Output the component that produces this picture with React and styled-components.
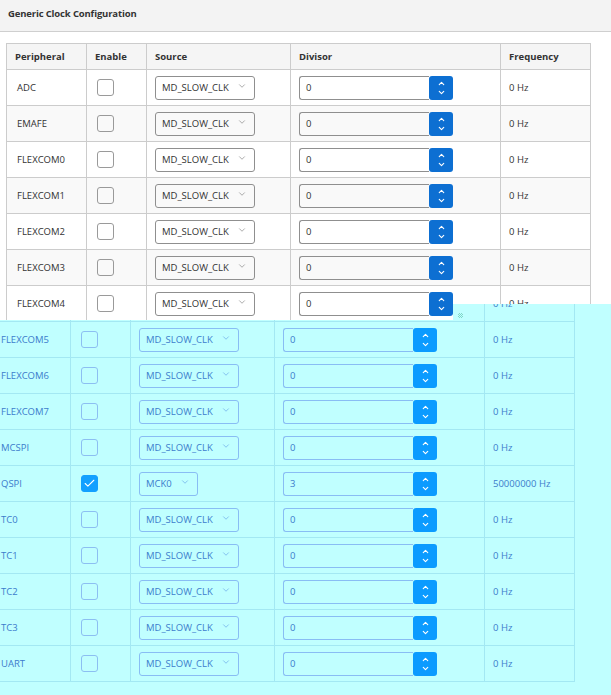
import React from "react";
import styled, { createGlobalStyle, ThemeProvider } from "styled-components";
import { ChevronDown, ChevronUp, Check } from "lucide-react";

const GlobalStyle = createGlobalStyle`
  html, body {
    margin: 0;
    padding: 0;
    background: #ffffff;
    overflow: hidden;
  }
  * {
    box-sizing: border-box;
  }
`;

const base = {
  page: "#ffffff",
  bar: "#f3f3f3",
  barLine: "#cfcfcf",
  head: "#f5f5f5",
  alt: "#f9f9f9",
  line: "#cccccc",
  text: "#333333",
  field: "#8f8f8f",
  box: "#9a9a9a",
  chevron: "#7a7a7a",
  spin: "#0d6fd2",
  check: "#0d6fd2",
};

// drag ghost of the lower rows, tinted and shifted left
const ghost = {
  page: "#c0ffff",
  bar: "#c0ffff",
  barLine: "#a3ecf4",
  head: "#c0ffff",
  alt: "#c0ffff",
  line: "#a3e8f3",
  text: "#3c7ccc",
  field: "#88bdf4",
  box: "#8cbff2",
  chevron: "#5f9de6",
  spin: "#0b9bff",
  check: "#12a0ff",
};

const rows = [
  { name: "ADC" },
  { name: "EMAFE" },
  { name: "FLEXCOM0" },
  { name: "FLEXCOM1" },
  { name: "FLEXCOM2" },
  { name: "FLEXCOM3" },
  { name: "FLEXCOM4" },
  { name: "FLEXCOM5" },
  { name: "FLEXCOM6" },
  { name: "FLEXCOM7" },
  { name: "MCSPI" },
  { name: "QSPI", enabled: true, source: "MCK0", divisor: "3", freq: "50000000 Hz" },
  { name: "TC0" },
  { name: "TC1" },
  { name: "TC2" },
  { name: "TC3" },
  { name: "UART" },
];

const ClockRow = ({ r, alt, freqOnly }) => (
  <Row $alt={alt}>
    <Cell>{!freqOnly && r.name}</Cell>
    <Cell $pad={10}>
      {!freqOnly && (
        <Box $on={r.enabled}>
          {r.enabled && <Check size={13} strokeWidth={2} color="#ffffff" />}
        </Box>
      )}
    </Cell>
    <Cell $pad={8}>
      {!freqOnly && (
        <Select>
          <span>{r.source || "MD_SLOW_CLK"}</span>
          <SelectArrow size={10} strokeWidth={1.5} />
        </Select>
      )}
    </Cell>
    <Cell $pad={8}>
      {!freqOnly && (
        <Spinner>
          <NumInput>{r.divisor || "0"}</NumInput>
          <SpinBtn>
            <ChevronUp size={9} strokeWidth={3} color="#ffffff" />
            <ChevronDown size={9} strokeWidth={3} color="#ffffff" />
          </SpinBtn>
        </Spinner>
      )}
    </Cell>
    <Cell $pad={8}>{r.freq || "0 Hz"}</Cell>
  </Row>
);

const App = () => (
  <>
    <GlobalStyle />
    <Screen>
      <ThemeProvider theme={base}>
        <Page>
          <TitleBar>Generic Clock Configuration</TitleBar>
          <Table>
            <HeadRow>
              <HeadCell>Peripheral</HeadCell>
              <HeadCell>Enable</HeadCell>
              <HeadCell>Source</HeadCell>
              <HeadCell>Divisor</HeadCell>
              <HeadCell>Frequency</HeadCell>
            </HeadRow>
            {rows.slice(0, 7).map((r, i) => (
              <ClockRow key={r.name} r={r} alt={i % 2 === 1} />
            ))}
          </Table>
        </Page>
      </ThemeProvider>
      <Ghost>
        <Cursor />
        <ThemeProvider theme={ghost}>
          <GhostTable>
            {rows.slice(6).map((r, i) => (
              <ClockRow key={r.name} r={r} freqOnly={i === 0} />
            ))}
          </GhostTable>
        </ThemeProvider>
      </Ghost>
    </Screen>
  </>
);

const Screen = styled.div`
  position: relative;
  width: 611px;
  height: 695px;
  overflow: hidden;
  font-family: "Open Sans", "Noto Sans", sans-serif;
`;

const Page = styled.div`
  width: 611px;
  height: 695px;
  background: ${(p) => p.theme.page};
  color: ${(p) => p.theme.text};
`;

const Ghost = styled.div`
  position: absolute;
  inset: 0;
  background: #c0ffff;
  color: ${ghost.text};
  clip-path: polygon(453px 304px, 611px 304px, 611px 695px, 0 695px, 0 320px, 453px 320px);
`;

const Cursor = styled.div`
  position: absolute;
  left: 458px;
  top: 313px;
  width: 5px;
  height: 5px;
  background: repeating-conic-gradient(#7fd6c8 0 25%, #c0ffff 0 50%) 0 0 / 2px 2px;
`;

const TitleBar = styled.div`
  height: 32px;
  padding: 7px 0 0 8px;
  background: ${(p) => p.theme.bar};
  border-bottom: 1px solid ${(p) => p.theme.barLine};
  font-size: 9.5px;
  font-weight: 700;
  line-height: 14px;
  letter-spacing: -0.15px;
`;

const Table = styled.div`
  width: 585px;
  margin: 11px 0 0 6px;
  border: 1px solid ${(p) => p.theme.line};
`;

const GhostTable = styled(Table)`
  margin: 285px 0 0 -10px;
  border-top: none;
`;

const HeadRow = styled.div`
  display: grid;
  grid-template-columns: 79px 60px 144px 210px 1fr;
  height: 25px;
  background: ${(p) => p.theme.head};
`;

const Row = styled(HeadRow)`
  height: 36px;
  border-top: 1px solid ${(p) => p.theme.line};
  background: ${(p) => (p.$alt ? p.theme.alt : p.theme.page)};
`;

const HeadCell = styled.div`
  display: flex;
  align-items: center;
  padding-left: 8px;
  font-size: 9.5px;
  font-weight: 700;
  &:not(:first-child) {
    border-left: 1px solid ${(p) => p.theme.line};
  }
`;

const Cell = styled.div`
  display: flex;
  align-items: center;
  padding-left: ${(p) => p.$pad || 10}px;
  font-size: 9.5px;
  &:not(:first-child) {
    border-left: 1px solid ${(p) => p.theme.line};
  }
`;

const Box = styled.div`
  width: 17px;
  height: 17px;
  border-radius: 3px;
  border: 1px solid ${(p) => (p.$on ? p.theme.check : p.theme.box)};
  background: ${(p) => (p.$on ? p.theme.check : "transparent")};
  display: flex;
  align-items: center;
  justify-content: center;
`;

const Select = styled.div`
  height: 24px;
  display: inline-flex;
  align-items: center;
  gap: 8px;
  padding: 0 7px 0 6px;
  border: 1px solid ${(p) => p.theme.field};
  border-radius: 3px;
  font-size: 9.5px;
`;

const SelectArrow = styled(ChevronDown)`
  color: ${(p) => p.theme.chevron};
  margin-top: -4px;
`;

const Spinner = styled.div`
  width: 154px;
  height: 24px;
  display: flex;
`;

const NumInput = styled.div`
  flex: 1;
  display: flex;
  align-items: center;
  padding-left: 6px;
  border: 1px solid ${(p) => p.theme.field};
  border-right: none;
  border-radius: 3px 0 0 3px;
  font-size: 9.5px;
`;

const SpinBtn = styled.div`
  width: 24px;
  display: flex;
  flex-direction: column;
  align-items: center;
  justify-content: center;
  background: ${(p) => p.theme.spin};
  border-radius: 3px;
`;

export default App;
